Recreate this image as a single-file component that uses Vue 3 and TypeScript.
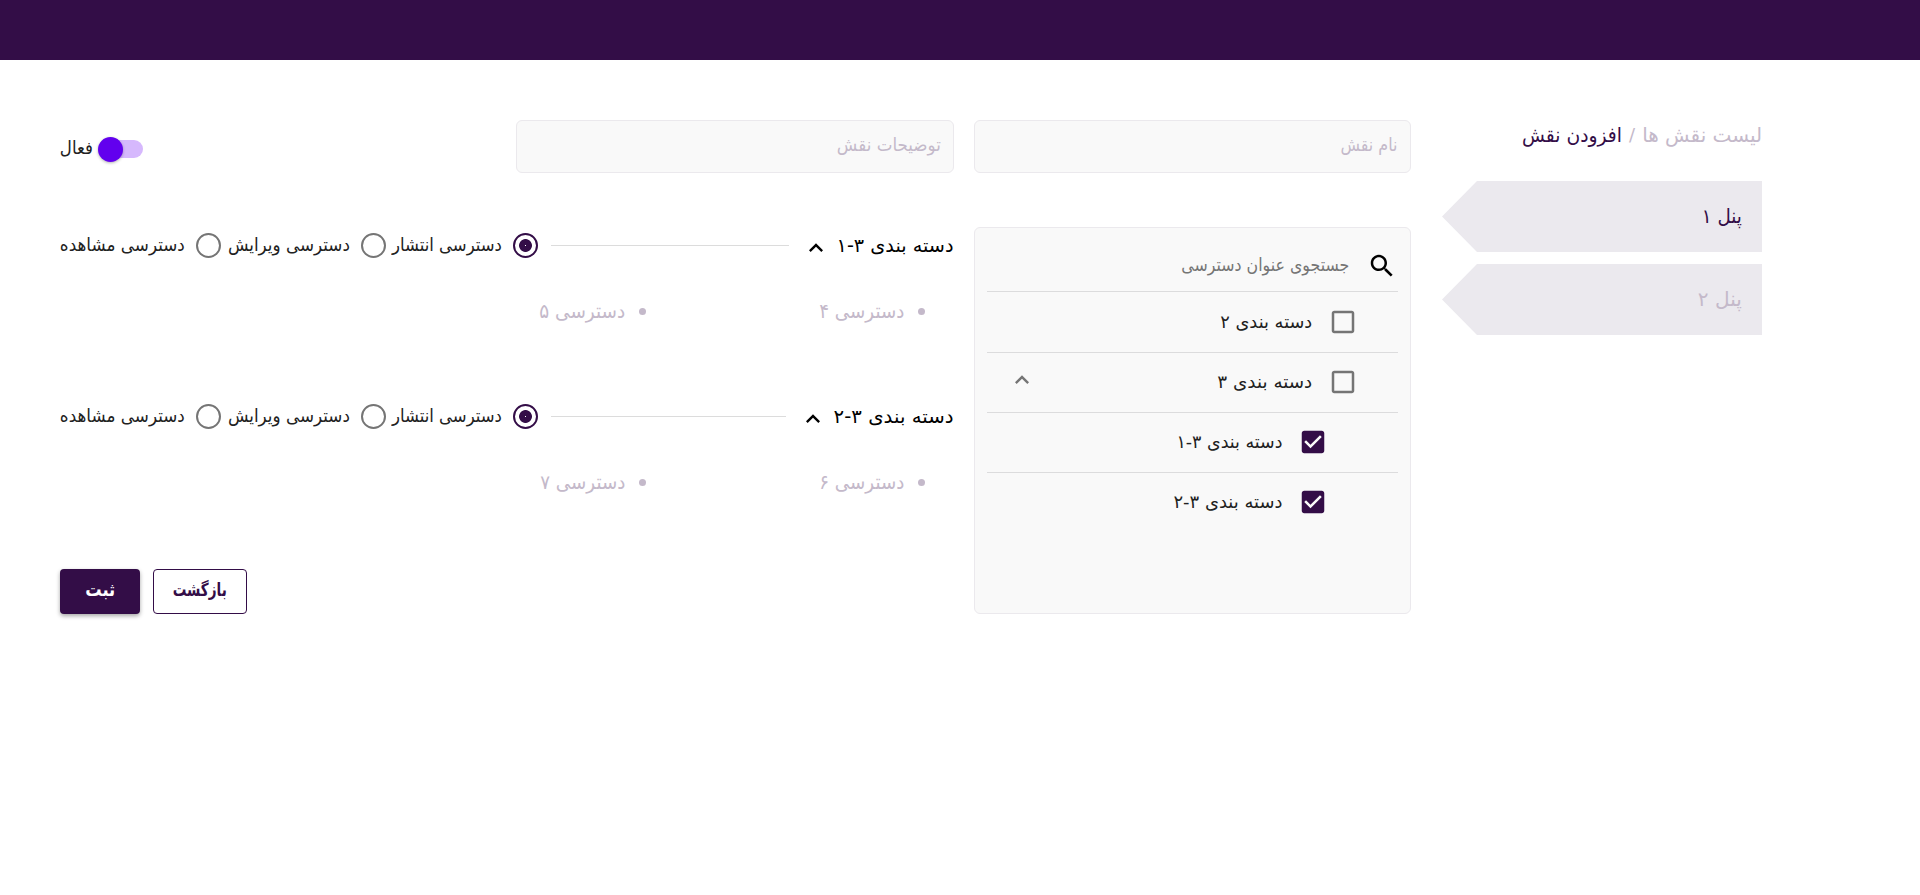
<script setup lang="ts">
import { nextTick } from 'vue'
import type { Directive } from 'vue'

interface Category { label: string; width: number; checked: boolean; nested: boolean; open?: boolean }
interface Access { label: string; width: number }
interface Section { title: string; width: number; items: Access[] }

const categories: Category[] = [
  { label: 'دسته بندی ۲', width: 92, checked: false, nested: false },
  { label: 'دسته بندی ۳', width: 95, checked: false, nested: false, open: true },
  { label: 'دسته بندی ۳-۱', width: 106, checked: true, nested: true },
  { label: 'دسته بندی ۳-۲', width: 109, checked: true, nested: true },
]

const sections: Section[] = [
  { title: 'دسته بندی ۳-۱', width: 117, items: [{ label: 'دسترسی ۴', width: 85 }, { label: 'دسترسی ۵', width: 86 }] },
  { title: 'دسته بندی ۳-۲', width: 120, items: [{ label: 'دسترسی ۶', width: 85 }, { label: 'دسترسی ۷', width: 85 }] },
]

const levels: Access[] = [
  { label: 'دسترسی انتشار', width: 110 },
  { label: 'دسترسی ویرایش', width: 122 },
  { label: 'دسترسی مشاهده', width: 125 },
]

// Scales a single-line label horizontally so that it fills the given width.
const vFit: Directive<HTMLElement, number> = {
  mounted(el, { value }) {
    nextTick(() => {
      const natural = el.getBoundingClientRect().width
      el.style.transform = `scaleX(${value / natural})`
      el.style.marginLeft = `${value - natural}px`
    })
  },
}
</script>

<template>
  <div class="page" dir="rtl">
    <header class="topbar"></header>
    <main class="main">
      <aside class="side">
        <nav class="crumbs">
          <span v-fit="120" class="t faded">لیست نقش ها</span>
          <span class="slash faded">/</span>
          <span v-fit="100" class="t">افزودن نقش</span>
        </nav>
        <div class="panel"><span v-fit="40" class="t">پنل ۱</span></div>
        <div class="panel faded"><span v-fit="44" class="t">پنل ۲</span></div>
      </aside>

      <section class="content">
        <div class="fields">
          <div class="field"><span v-fit="57" class="t">نام نقش</span></div>
          <div class="field"><span v-fit="104" class="t">توضیحات نقش</span></div>
          <div class="toggle">
            <span class="track"><span class="thumb"></span></span>
            <span v-fit="33" class="t">فعال</span>
          </div>
        </div>

        <div class="body">
          <div class="tree">
            <div class="search">
              <svg class="search-icon" viewBox="0 0 24 24"><path d="M15.5 14h-.79l-.28-.27C15.41 12.59 16 11.11 16 9.5 16 5.91 13.09 3 9.5 3S3 5.91 3 9.5 5.91 16 9.5 16c1.61 0 3.09-.59 4.23-1.57l.27.28v.79l5 4.99L20.49 19l-4.99-5zm-6 0C7.01 14 5 11.99 5 9.5S7.01 5 9.5 5 14 7.01 14 9.5 11.99 14 9.5 14z" /></svg>
              <span v-fit="168" class="t">جستجوی عنوان دسترسی</span>
            </div>
            <div v-for="c in categories" :key="c.label" class="row" :class="{ nested: c.nested }">
              <svg class="check" :class="{ on: c.checked }" viewBox="0 0 24 24">
                <path v-if="c.checked" d="M19 3H5c-1.11 0-2 .9-2 2v14c0 1.1.89 2 2 2h14c1.11 0 2-.9 2-2V5c0-1.1-.89-2-2-2zm-9 14l-5-5 1.41-1.41L10 14.17l7.59-7.59L19 8l-9 9z" />
                <path v-else d="M19 5v14H5V5h14m0-2H5c-1.1 0-2 .9-2 2v14c0 1.1.9 2 2 2h14c1.1 0 2-.9 2-2V5c0-1.1-.9-2-2-2z" />
              </svg>
              <span v-fit="c.width" class="t">{{ c.label }}</span>
              <svg v-if="c.open" class="chevron" viewBox="0 0 24 24"><path d="M12 8l-6 6 1.41 1.41L12 10.83l4.59 4.58L18 14z" /></svg>
            </div>
          </div>

          <div class="access">
            <div v-for="s in sections" :key="s.title" class="group">
              <div class="head">
                <span v-fit="s.width" class="t title">{{ s.title }}</span>
                <svg class="chevron" viewBox="0 0 24 24"><path d="M12 8l-6 6 1.41 1.41L12 10.83l4.59 4.58L18 14z" /></svg>
                <span class="line"></span>
                <span v-for="(l, i) in levels" :key="l.label" class="level">
                  <span class="radio" :class="{ on: i === 0 }"></span>
                  <span v-fit="l.width" class="t">{{ l.label }}</span>
                </span>
              </div>
              <ul class="items">
                <li v-for="a in s.items" :key="a.label"><i class="dot"></i><span v-fit="a.width" class="t">{{ a.label }}</span></li>
              </ul>
            </div>
            <div class="actions">
              <button class="btn outline"><span v-fit="54" class="t">بازگشت</span></button>
              <button class="btn solid"><span v-fit="30" class="t">ثبت</span></button>
            </div>
          </div>
        </div>
      </section>
    </main>
  </div>
</template>

<style>
body { margin: 0; background: #fff; }
</style>

<style scoped>
* { box-sizing: border-box; }
.page { font-family: "DejaVu Sans", sans-serif; font-size: 18px; color: #212121; min-height: 895px; }
.topbar { height: 60px; background: #330d47; }
.main { display: flex; gap: 31px; padding: 60px 158px 0 60px; }
.t { display: inline-block; flex: none; white-space: nowrap; line-height: 24px; transform-origin: right center; }
.side { width: 320px; flex: none; color: #330d47; font-size: 20px; }
.faded { color: #c4b9ca; }
.crumbs { height: 61px; display: flex; align-items: flex-start; padding-top: 3px; }
.slash { width: 20px; text-align: center; line-height: 24px; font-size: 18px; }
.panel { height: 71px; margin-bottom: 12px; padding: 0 20px 2px 0; display: flex; align-items: center; background: #ebe9ee; clip-path: polygon(0 50%, 35px 0, 100% 0, 100% 100%, 35px 100%); }
.content { flex: 1; min-width: 0; }
.fields { display: flex; gap: 20px; height: 107px; }
.field { width: 437px; height: 53px; border: 1px solid #ebe9ed; border-radius: 6px; background: #f9f9f9; padding: 0 13px 3px; display: flex; align-items: center; color: #c4b9ca; }
.field + .field { width: 438px; padding-right: 12px; }
.toggle { margin-right: auto; height: 58px; display: flex; align-items: center; gap: 17px; }
.toggle .t { margin-top: -2px; }
.track { width: 33px; height: 18px; border-radius: 9px; background: #d6b8fd; display: flex; align-items: center; justify-content: flex-end; }
.thumb { width: 25px; height: 25px; flex: none; border-radius: 50%; background: #6200ee; box-shadow: 0 1px 3px rgba(0, 0, 0, .3); margin-left: -12px; }
.body { display: flex; gap: 20px; }
.tree { width: 437px; height: 387px; flex: none; border: 1px solid #ebe9ed; border-radius: 6px; background: #f9f9f9; padding: 12px 12px 0; }
.search { height: 51px; display: flex; align-items: center; padding: 0 1px; color: #757575; }
.search .t { margin-top: -2px; }
.search-icon { width: 30px; height: 30px; fill: #000; margin-left: 18px; }
.row { height: 60px; border-top: 1px solid #dcdcdd; display: flex; align-items: center; padding: 0 40px 1px 48px; }
.row:nth-child(2) { height: 61px; }
.row.nested { padding-right: 70px; }
.check { width: 30px; height: 30px; flex: none; fill: #757575; margin-left: 16px; }
.check.on { fill: #330d47; }
.chevron { width: 28px; height: 28px; flex: none; fill: #000; }
.row .chevron { margin-right: auto; margin-left: -27px; margin-bottom: 5px; fill: #757575; }
.access { flex: 1; min-width: 0; }
.group { height: 171px; padding-top: 6px; }
.head { display: flex; align-items: center; height: 25px; }
.title { color: #000; font-size: 19px; margin-top: -2px; }
.head .chevron { margin: 4px 7px 0 0; }
.line { flex: 1; height: 1px; background: #dcdcdc; margin: 0 13px; }
.level { display: flex; align-items: center; }
.level .t { margin-top: -1px; }
.level + .level { margin-right: 6px; }
.level:last-child { margin-right: 7px; }
.radio { width: 25px; height: 25px; flex: none; border: 2px solid #757575; border-radius: 50%; margin-left: 11px; }
.radio.on { border-color: #330d47; background: radial-gradient(circle, #fff 0 0.4px, #330d47 0.9px 6px, transparent 6.8px); }
.items { list-style: none; margin: 0; padding: 40px 29px 0 0; display: flex; color: #c4b9ca; font-size: 20px; }
.items li { width: 279px; display: flex; align-items: center; height: 26px; }
.dot { width: 7px; height: 7px; flex: none; border-radius: 50%; background: #c4b9ca; margin-left: 14px; }
.actions { display: flex; justify-content: flex-end; gap: 13px; }
.btn { height: 45px; padding: 0 0 3px; border-radius: 4px; display: flex; align-items: center; justify-content: center; font: bold 18px "DejaVu Sans", sans-serif; }
.outline { width: 94px; border: 1px solid #330d47; background: #fff; color: #330d47; }
.solid { width: 80px; border: 0; background: #330d47; color: #fff; box-shadow: 0 2px 4px rgba(0, 0, 0, .35); }
</style>
